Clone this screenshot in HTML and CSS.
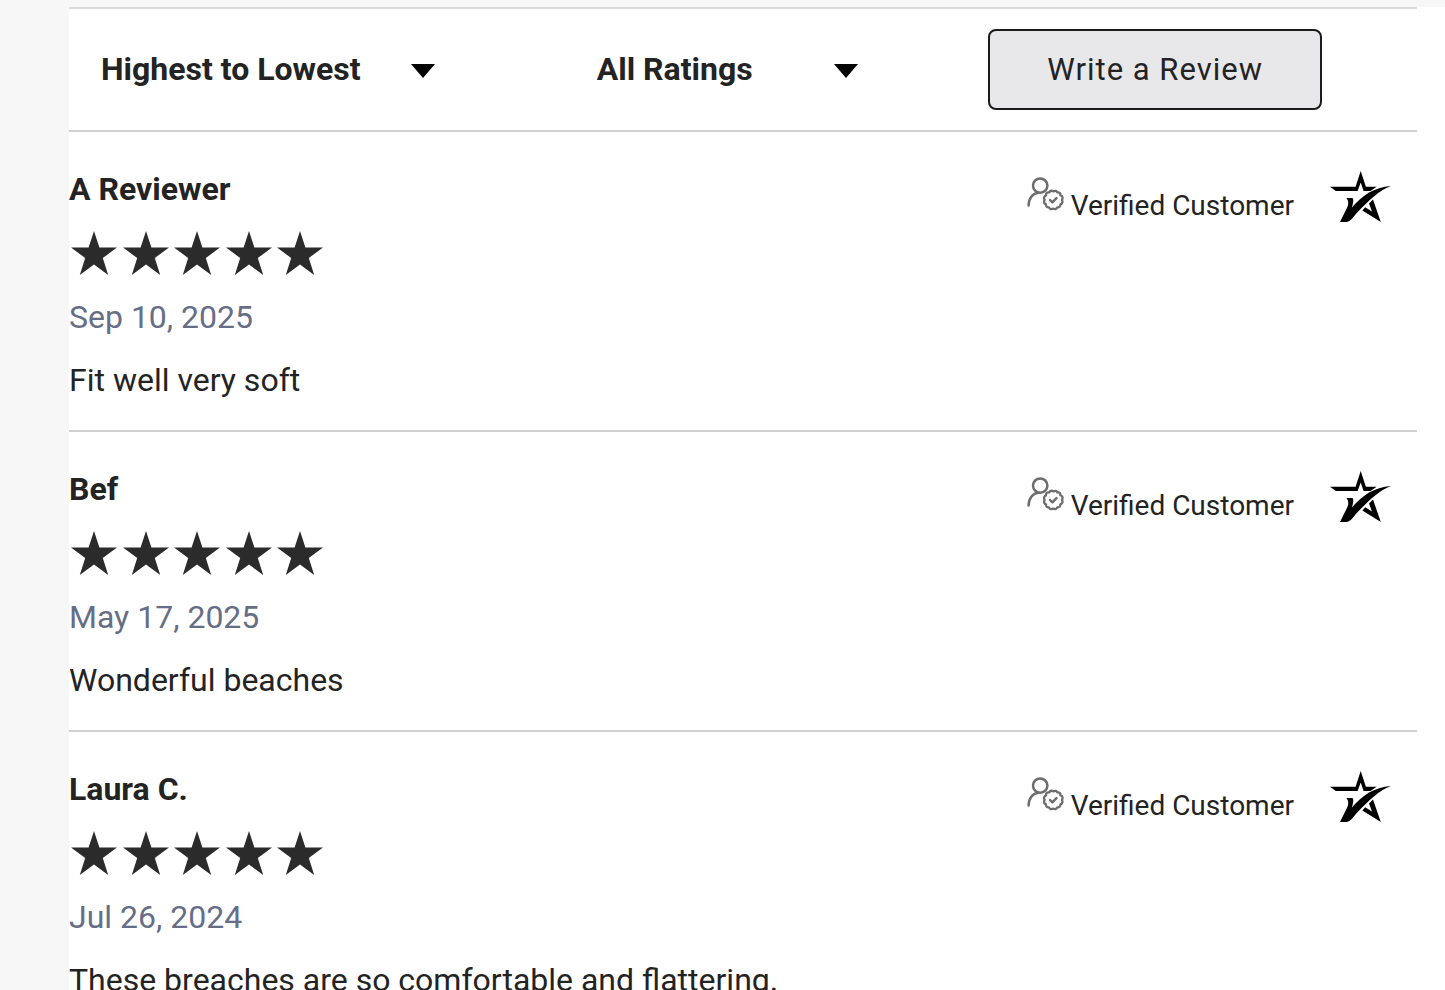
FILE: index.html
```html
<!DOCTYPE html>
<html lang="en">
<head>
    <meta charset="UTF-8">
    <meta name="viewport" content="width=device-width, initial-scale=1.0">
    <title>Customer Reviews</title>
    <link rel="stylesheet" href="styles.css">
</head>
<body>
    <!-- Shared icons -->
    <svg class="icon-defs" aria-hidden="true">
        <symbol id="star" viewBox="0 0 46 44">
            <path d="M23 0L28.4 16.6H46L31.8 27L37.2 44L23 33.6L8.8 44L14.2 27L0 16.6H17.6Z"/>
        </symbol>
        <symbol id="stars" viewBox="0 0 254 44">
            <use href="#star" x="0" width="46" height="44"/>
            <use href="#star" x="52" width="46" height="44"/>
            <use href="#star" x="103" width="46" height="44"/>
            <use href="#star" x="155" width="46" height="44"/>
            <use href="#star" x="206" width="46" height="44"/>
        </symbol>
        <symbol id="verified" viewBox="0 0 38 34">
            <g fill="none" stroke="#6d6d6d" stroke-width="2.5" stroke-linecap="round" stroke-linejoin="round">
                <circle cx="13.2" cy="8.6" r="7.2"/>
                <path d="M1.6 28.5C1.6 21.5 5.6 16.4 11.4 15.8"/>
                <path stroke-width="2.3" d="M26.6 14.4Q29.2 12.8 30.4 15.4Q33.6 15 33.4 18.2Q36.8 19.6 35 22.9Q36.6 26.2 33.4 27.4Q33.4 30.6 30.2 30.4Q28.8 33.2 26.2 31.6Q23.2 33.2 22 30.4Q18.8 30.6 19 27.4Q16 26 17.6 22.9Q16 19.8 19 18.4Q18.8 15 22.2 15.4Q23.6 12.8 26.6 14.4Z"/>
                <path d="M23.1 23.1L25.4 25.3L29.5 21.1"/>
            </g>
        </symbol>
        <symbol id="brand" viewBox="0 0 62 54">
            <path d="M0 15.7H25.6L30.7 0L35.9 15.7H46.7L40.5 20H33.6L30.7 11.6L27.6 20H5.8Z"/>
            <path d="M16.4 27H22.4C24.2 28.6 22.8 33.6 21.8 36.8C32.4 24 44 16.4 61 15C48 20 39.4 29.4 28.2 40.4C22.6 46 21.4 51 14.6 51H10L17.4 36C18.8 32.4 18.6 29.6 16.4 27Z"/>
            <path d="M43 28.4L50.8 51L32.4 39.4L35.2 36.2L42 40.4L39 32.6Z"/>
        </symbol>
    </svg>

    <main class="reviews">
        <form class="toolbar">
            <div class="field field-sort">
                <select class="select" aria-label="Sort reviews">
                    <option>Highest to Lowest</option>
                    <option>Lowest to Highest</option>
                </select>
                <svg class="arrow" viewBox="0 0 24 14" aria-hidden="true"><path d="M0 0H24L12 14Z"/></svg>
            </div>
            <div class="field field-rating">
                <select class="select" aria-label="Filter by rating">
                    <option>All Ratings</option>
                    <option>5 Stars</option>
                    <option>4 Stars</option>
                </select>
                <svg class="arrow" viewBox="0 0 24 14" aria-hidden="true"><path d="M0 0H24L12 14Z"/></svg>
            </div>
            <button type="button" class="write-btn">Write a Review</button>
        </form>

        <article class="review">
            <div class="review-body">
                <h3 class="name">A Reviewer</h3>
                <svg class="stars" role="img" aria-label="5 out of 5"><use href="#stars"/></svg>
                <p class="date">Sep 10, 2025</p>
                <p class="comment">Fit well very soft</p>
            </div>
            <div class="badge">
                <svg class="verified-icon" aria-hidden="true"><use href="#verified"/></svg>
                <span class="verified-text">Verified Customer</span>
                <svg class="brand-icon" aria-hidden="true"><use href="#brand"/></svg>
            </div>
        </article>

        <article class="review">
            <div class="review-body">
                <h3 class="name">Bef</h3>
                <svg class="stars" role="img" aria-label="5 out of 5"><use href="#stars"/></svg>
                <p class="date">May 17, 2025</p>
                <p class="comment">Wonderful beaches</p>
            </div>
            <div class="badge">
                <svg class="verified-icon" aria-hidden="true"><use href="#verified"/></svg>
                <span class="verified-text">Verified Customer</span>
                <svg class="brand-icon" aria-hidden="true"><use href="#brand"/></svg>
            </div>
        </article>

        <article class="review">
            <div class="review-body">
                <h3 class="name">Laura C.</h3>
                <svg class="stars" role="img" aria-label="5 out of 5"><use href="#stars"/></svg>
                <p class="date">Jul 26, 2024</p>
                <p class="comment">These breaches are so comfortable and flattering.</p>
            </div>
            <div class="badge">
                <svg class="verified-icon" aria-hidden="true"><use href="#verified"/></svg>
                <span class="verified-text">Verified Customer</span>
                <svg class="brand-icon" aria-hidden="true"><use href="#brand"/></svg>
            </div>
        </article>
    </main>
</body>
</html>
```
FILE: styles.css
```css
* {
    box-sizing: border-box;
}
html {
    scrollbar-width: none;
}
body {
    margin: 0;
    padding: 7px 0 0 69px;
    background-color: #f7f7f7;
    color: #232323;
    font-family: Roboto, sans-serif;
    font-size: 32px;
    line-height: 39px;
}
.icon-defs {
    position: absolute;
    width: 0;
    height: 0;
}
.reviews {
    padding-right: 28px;
    background-color: #ffffff;
}

/* Sort and filter bar */
.toolbar {
    display: flex;
    align-items: center;
    justify-content: space-between;
    padding: 20px 95px 20px 32px;
    border-top: 2px solid #d9dade;
    border-bottom: 2px solid #d0d0d2;
}
.field {
    position: relative;
}
.field-sort {
    width: 365px;
    padding-right: 31px;
}
.field-rating {
    width: 261px;
}
.select {
    display: block;
    width: 100%;
    padding: 0;
    border: none;
    appearance: none;
    background: none;
    color: #232323;
    font: inherit;
    font-weight: bold;
}
.arrow {
    position: absolute;
    top: 14px;
    right: 0;
    width: 24px;
    height: 14px;
    pointer-events: none;
}
.field-sort .arrow {
    right: 31px;
}
.write-btn {
    padding: 19px 57px;
    border: 2px solid #1b1b1b;
    border-radius: 8px;
    background-color: #e8e8ea;
    color: #232323;
    font: inherit;
    font-size: 31px;
    letter-spacing: 1px;
    cursor: pointer;
}

/* Single review */
.review {
    display: flex;
    justify-content: space-between;
    padding: 38px 25px 30px 0;
    border-bottom: 2px solid #d0d0d2;
}
.name {
    margin: 0;
    font-size: 32px;
    font-weight: bold;
}
.stars {
    display: block;
    width: 254px;
    height: 44px;
    margin: 22px 0 23px 2px;
    fill: #2b2b2b;
}
.date {
    margin: 0 0 24px;
    color: #666e87;
}
.comment {
    margin: 0;
}
.badge {
    display: flex;
    align-items: flex-start;
    padding-top: 1px;
}
.verified-icon {
    width: 38px;
    height: 34px;
    margin: 6px 6px 0 0;
}
.verified-text {
    padding-top: 15px;
    font-size: 28px;
}
.brand-icon {
    width: 62px;
    height: 54px;
    margin-left: 36px;
}
```
